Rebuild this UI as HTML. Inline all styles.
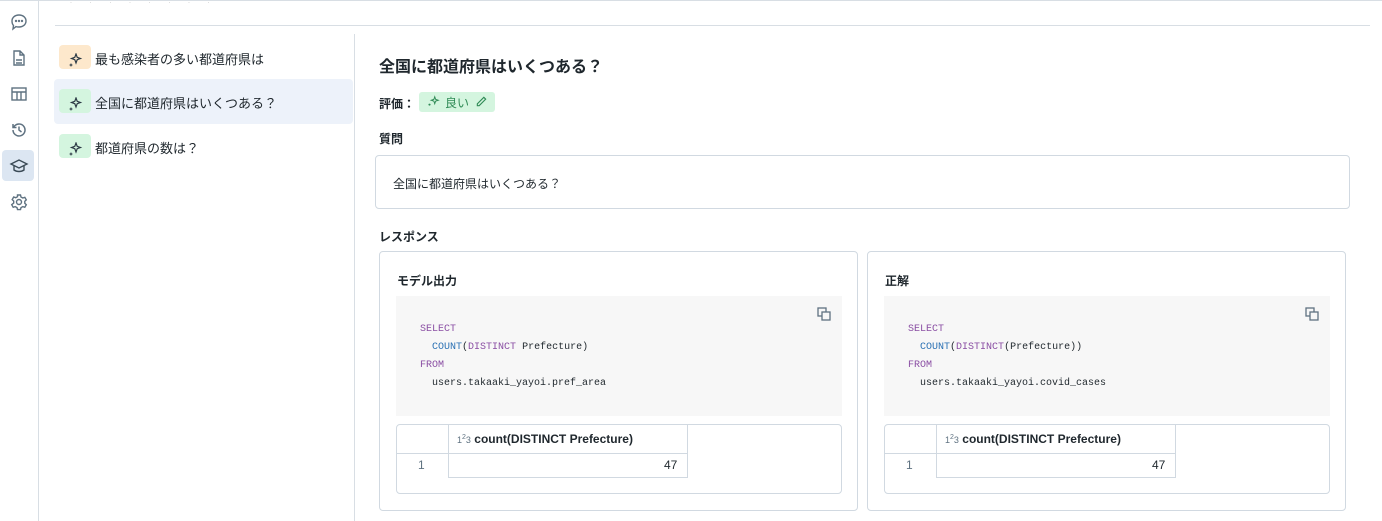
<!DOCTYPE html>
<html><head><meta charset="utf-8"><style>
*{box-sizing:border-box;margin:0;padding:0}
body{width:1382px;height:521px;overflow:hidden;background:#fff;font-family:"Liberation Sans","Noto Sans CJK JP",sans-serif;color:#1f272d;position:relative;font-size:13px}
.abs{position:absolute}
.side{left:0;top:0;width:39px;height:521px;border-right:1px solid #d8dee4}
.ic{position:absolute;left:9px;width:20px;height:20px}
.item{position:absolute;left:54px;width:299px;height:45px;border-radius:4px}
.badge{position:absolute;left:5px;top:10px;width:32px;height:24px;border-radius:4px}
.item .t{position:absolute;left:41px;top:14px;font-size:13px;color:#1f272d}
.card{position:absolute;top:251px;width:479px;height:260px;border:1px solid #d1d9e1;border-radius:4px}
.code{position:absolute;left:16px;top:44px;width:446px;height:120px;background:#f7f7f7;font-family:"Liberation Mono",monospace;font-size:10px;line-height:18px;padding:25px 0 0 24px;color:#1f272d}
.kw{color:#8a4ea3}.fn{color:#2b71b4}
.tbl{position:absolute;left:16px;top:172px;width:446px;height:70px;border:1px solid #d1d9e1;border-radius:4px}
</style></head><body>
<div class="abs" style="left:0;top:0;width:1382px;height:2px;border-top:1px solid #d8dee4"></div>
<div class="abs side"></div>
<svg class="ic" style="top:12px" viewBox="0 0 20 20" fill="none" stroke="#5f7281" stroke-width="1.4"><path d="M10 3c4 0 7 2.5 7 6s-3 6-7 6c-1 0-2 0-3-.4L4 17l.5-3.5C3.5 12.4 3 11 3 9c0-3.5 3-6 7-6z"/><circle cx="7" cy="9" r=".5"/><circle cx="10" cy="9" r=".5"/><circle cx="13" cy="9" r=".5"/></svg>
<svg class="ic" style="top:48px" viewBox="0 0 20 20" fill="none" stroke="#5f7281" stroke-width="1.4"><path d="M5 3h6l4 4v10H5z M11 3v4h4 M7 12h6 M7 15h6"/></svg>
<svg class="ic" style="top:84px" viewBox="0 0 20 20" fill="none" stroke="#5f7281" stroke-width="1.4"><rect x="3" y="4" width="14" height="12"/><path d="M3 8h14 M8 8v8 M12 8v8"/></svg>
<svg class="ic" style="top:120px" viewBox="0 0 20 20" fill="none" stroke="#5f7281" stroke-width="1.5"><path d="M4 10a6 6 0 1 0 2-4.5L4 7.5M4 4v3.5h3.5 M10 6.5V10l2.5 2"/></svg>
<div class="abs" style="left:2px;top:150px;width:32px;height:31px;background:#dce6f2;border-radius:4px"></div>
<svg class="ic" style="top:156px" viewBox="0 0 20 20" fill="none" stroke="#3a4a56" stroke-width="1.4"><path d="M2 8l8-4 8 4-8 4z M5 9.5V14c3 2 7 2 10 0V9.5"/></svg>
<svg class="ic" style="top:192px" viewBox="0 0 20 20" fill="none" stroke="#5f7281" stroke-width="1.4"><circle cx="10" cy="10" r="2.5"/><path d="M8.5 3h3l.5 2 1.8 1 2-.7 1.5 2.6-1.5 1.4v2l1.5 1.4-1.5 2.6-2-.7-1.8 1-.5 2h-3l-.5-2-1.8-1-2 .7-1.5-2.6L4.7 11V9L3.2 7.6l1.5-2.6 2 .7 1.8-1z"/></svg>
<div class="abs" style="left:70px;top:0;font-size:6px;color:#aaa;letter-spacing:8px">· · · · · · · ·</div>
<div class="abs" style="left:55px;top:25px;width:1315px;border-top:1px solid #d8dee4"></div>
<div class="abs" style="left:354px;top:34px;height:487px;border-left:1px solid #d8dee4"></div>

<div class="item" style="top:35px"><div class="badge" style="background:#fde8cc"></div><svg class="abs" style="left:13px;top:18px" width="16" height="16" viewBox="0 0 16 16" fill="#2c3a45"><path d="M9 1l1.2 3.3L13.5 5.5 10.2 6.7 9 10 7.8 6.7 4.5 5.5 7.8 4.3z" fill="none" stroke="#2c3a45" stroke-width="1.2"/><path d="M4 10l.6 1.4L6 12l-1.4.6L4 14l-.6-1.4L2 12l1.4-.6z"/></svg><div class="t">最も感染者の多い都道府県は</div></div>
<div class="item" style="top:79px;background:#edf2fa"><div class="badge" style="background:#d4f5df"></div><svg class="abs" style="left:13px;top:18px" width="16" height="16" viewBox="0 0 16 16" fill="#2c3a45"><path d="M9 1l1.2 3.3L13.5 5.5 10.2 6.7 9 10 7.8 6.7 4.5 5.5 7.8 4.3z" fill="none" stroke="#2c3a45" stroke-width="1.2"/><path d="M4 10l.6 1.4L6 12l-1.4.6L4 14l-.6-1.4L2 12l1.4-.6z"/></svg><div class="t">全国に都道府県はいくつある？</div></div>
<div class="item" style="top:124px"><div class="badge" style="background:#d4f5df"></div><svg class="abs" style="left:13px;top:18px" width="16" height="16" viewBox="0 0 16 16" fill="#2c3a45"><path d="M9 1l1.2 3.3L13.5 5.5 10.2 6.7 9 10 7.8 6.7 4.5 5.5 7.8 4.3z" fill="none" stroke="#2c3a45" stroke-width="1.2"/><path d="M4 10l.6 1.4L6 12l-1.4.6L4 14l-.6-1.4L2 12l1.4-.6z"/></svg><div class="t">都道府県の数は？</div></div>

<div class="abs" style="left:379px;top:53px;font-size:16px;font-weight:bold">全国に都道府県はいくつある？</div>
<div class="abs" style="left:379px;top:95px;font-size:12px;font-weight:bold">評価：</div>
<div class="abs" style="left:419px;top:92px;width:76px;height:20px;background:#d4f5df;border-radius:3px;color:#2f8a55;font-size:12px;padding:2px 0 0 26px">良い</div>
<svg class="abs" style="left:426px;top:95px" width="14" height="14" viewBox="0 0 16 16" fill="#2f8a55"><path d="M10 2l1 3 3 1-3 1-1 3-1-3-3-1 3-1z" fill="none" stroke="#2f8a55" stroke-width="1.1"/><circle cx="4" cy="11" r="1.2"/></svg>
<svg class="abs" style="left:475px;top:95px" width="13" height="13" viewBox="0 0 14 14" fill="none" stroke="#2f8a55" stroke-width="1.2"><path d="M9.5 2.5l2 2-7 7H2.5v-2z"/></svg>
<div class="abs" style="left:379px;top:130px;font-size:12px;font-weight:bold">質問</div>
<div class="abs" style="left:375px;top:155px;width:975px;height:54px;border:1px solid #d1d9e1;border-radius:4px;padding:19px 0 0 17px;font-size:12px">全国に都道府県はいくつある？</div>
<div class="abs" style="left:379px;top:228px;font-size:12px;font-weight:bold">レスポンス</div>

<div class="card" style="left:379px">
<div class="abs" style="left:17px;top:20px;font-size:12px;font-weight:bold">モデル出力</div>
<div class="code"><span class="kw">SELECT</span><br>&nbsp;&nbsp;<span class="fn">COUNT</span>(<span class="kw">DISTINCT</span> Prefecture)<br><span class="kw">FROM</span><br>&nbsp;&nbsp;users.takaaki_yayoi.pref_area</div>
<svg class="abs" style="left:437px;top:55px" width="14" height="14" viewBox="0 0 14 14" fill="none" stroke="#5f7281" stroke-width="1.3"><rect x="1" y="1" width="8" height="8"/><rect x="5" y="5" width="8" height="8" fill="#f7f7f7"/></svg>
<div class="tbl"><div class="abs" style="left:51px;top:0;width:240px;height:53px;border-left:1px solid #d1d9e1;border-right:1px solid #d1d9e1;border-bottom:1px solid #d1d9e1"></div><div class="abs" style="left:0;top:28px;width:291px;border-top:1px solid #d1d9e1"></div>
<div class="abs" style="left:60px;top:7px;font-size:12px;font-weight:bold"><span style="font-size:9px;font-weight:normal;color:#5f7281">1<sup style="font-size:7px">2</sup>3</span> count(DISTINCT Prefecture)</div>
<div class="abs" style="left:21px;top:33px;font-size:12px;color:#5f7281">1</div>
<div class="abs" style="left:267px;top:33px;font-size:12px">47</div></div>
</div>

<div class="card" style="left:867px">
<div class="abs" style="left:17px;top:20px;font-size:12px;font-weight:bold">正解</div>
<div class="code"><span class="kw">SELECT</span><br>&nbsp;&nbsp;<span class="fn">COUNT</span>(<span class="kw">DISTINCT</span>(Prefecture))<br><span class="kw">FROM</span><br>&nbsp;&nbsp;users.takaaki_yayoi.covid_cases</div>
<svg class="abs" style="left:437px;top:55px" width="14" height="14" viewBox="0 0 14 14" fill="none" stroke="#5f7281" stroke-width="1.3"><rect x="1" y="1" width="8" height="8"/><rect x="5" y="5" width="8" height="8" fill="#f7f7f7"/></svg>
<div class="tbl"><div class="abs" style="left:51px;top:0;width:240px;height:53px;border-left:1px solid #d1d9e1;border-right:1px solid #d1d9e1;border-bottom:1px solid #d1d9e1"></div><div class="abs" style="left:0;top:28px;width:291px;border-top:1px solid #d1d9e1"></div>
<div class="abs" style="left:60px;top:7px;font-size:12px;font-weight:bold"><span style="font-size:9px;font-weight:normal;color:#5f7281">1<sup style="font-size:7px">2</sup>3</span> count(DISTINCT Prefecture)</div>
<div class="abs" style="left:21px;top:33px;font-size:12px;color:#5f7281">1</div>
<div class="abs" style="left:267px;top:33px;font-size:12px">47</div></div>
</div>
</body></html>
